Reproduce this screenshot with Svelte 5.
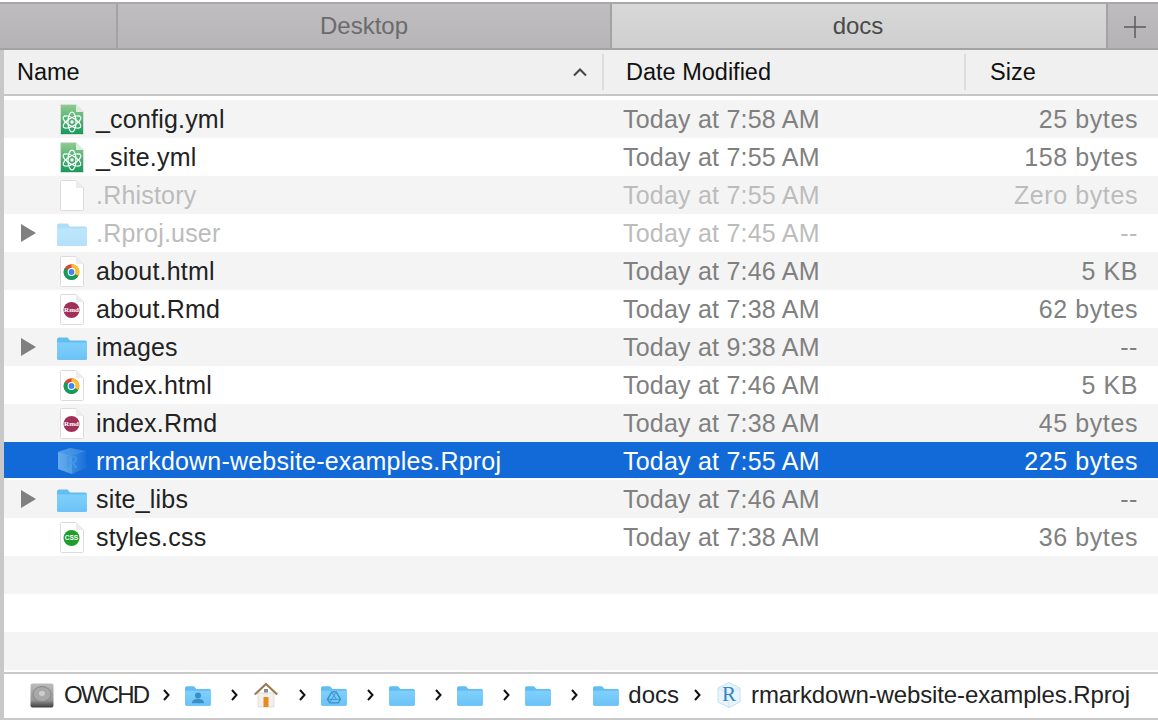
<script lang="ts">
  type Row = { name: string; date: string; size: string; icon: string; dim?: boolean; open?: boolean; selected?: boolean };

  const rows: Row[] = [
    { name: "_config.yml", date: "Today at 7:58 AM", size: "25 bytes", icon: "atom" },
    { name: "_site.yml", date: "Today at 7:55 AM", size: "158 bytes", icon: "atom" },
    { name: ".Rhistory", date: "Today at 7:55 AM", size: "Zero bytes", icon: "blank", dim: true },
    { name: ".Rproj.user", date: "Today at 7:45 AM", size: "--", icon: "folder", dim: true, open: true },
    { name: "about.html", date: "Today at 7:46 AM", size: "5 KB", icon: "chrome" },
    { name: "about.Rmd", date: "Today at 7:38 AM", size: "62 bytes", icon: "rmd" },
    { name: "images", date: "Today at 9:38 AM", size: "--", icon: "folder", open: true },
    { name: "index.html", date: "Today at 7:46 AM", size: "5 KB", icon: "chrome" },
    { name: "index.Rmd", date: "Today at 7:38 AM", size: "45 bytes", icon: "rmd" },
    { name: "rmarkdown-website-examples.Rproj", date: "Today at 7:55 AM", size: "225 bytes", icon: "cube", selected: true },
    { name: "site_libs", date: "Today at 7:46 AM", size: "--", icon: "folder", open: true },
    { name: "styles.css", date: "Today at 7:38 AM", size: "36 bytes", icon: "css" }
  ];
  const fillers = [0, 1, 2];
</script>

{#snippet page(fill = "#fff")}
  <path d="M1.5 0.5H16L23.5 8V29a1 1 0 0 1-1 1.5H1.5a1 1 0 0 1-1-1.5V1.5a1 1 0 0 1 1-1z" fill={fill} stroke="#dcdcdc" stroke-width="1" />
  <path d="M16 0.5V8H23.5z" fill="#ececec" />
{/snippet}

{#snippet folderShape()}
  <path d="M2 2.5h8.5l2.5 3h15a2 2 0 0 1 2 2V23a2 2 0 0 1-2 2H2a2 2 0 0 1-2-2V4.5a2 2 0 0 1 2-2z" fill="#62bdf3" />
  <path d="M0 7.5h30V23a2 2 0 0 1-2 2H2a2 2 0 0 1-2-2z" fill="url(#folder-body)" />
{/snippet}

{#snippet fileIcon(kind: string, dim: boolean)}
  {#if kind === "folder"}
    <svg class="ico folder" class:faded={dim} viewBox="0 0 30 25">{@render folderShape()}</svg>
  {:else if kind === "cube"}
    <svg class="ico cube" viewBox="0 0 30 28">
      <path d="M1 5 13 1l16 3v17l-14 6L1 22z" fill="url(#cube-dark)" />
      <path d="M1 5l14 4v18L1 22z" fill="#6db2ee" opacity="0.45" />
      <path d="M1 5 13 1l16 3-14 5z" fill="#4a9ae8" opacity="0.5" />
      <text x="15" y="21" class="cube-r">R</text>
    </svg>
  {:else}
    <svg class="ico doc" viewBox="0 0 24 31">
      {#if kind === "atom"}
        {@render page("url(#atom-green)")}
        <path d="M16 0.5V8H23.5z" fill="#dcecdf" />
        <g fill="none" stroke="#fff" stroke-width="1.2">
          <ellipse cx="12" cy="18" rx="10" ry="4" transform="rotate(30 12 18)" />
          <ellipse cx="12" cy="18" rx="10" ry="4" transform="rotate(90 12 18)" />
          <ellipse cx="12" cy="18" rx="10" ry="4" transform="rotate(150 12 18)" />
        </g>
        <circle cx="12" cy="18" r="1.7" fill="#fff" />
      {:else if kind === "blank"}
        {@render page()}
      {:else if kind === "chrome"}
        {@render page()}
        <circle cx="11.5" cy="16" r="7.8" fill="#db4437" />
        <path d="M11.5 16 4.7 19.9A7.8 7.8 0 0 1 4.8 12z" fill="#0f9d58" />
        <path d="M11.5 16 18.3 19.9A7.8 7.8 0 0 1 4.7 19.9z" fill="#0f9d58" />
        <path d="M11.5 16V8.2A7.8 7.8 0 0 1 18.3 19.9z" fill="#fbc02d" />
        <circle cx="11.5" cy="16" r="3.9" fill="#fff" />
        <circle cx="11.5" cy="16" r="2.9" fill="#4285f4" />
      {:else if kind === "rmd"}
        {@render page()}
        <circle cx="11.5" cy="16" r="8" fill="#a03058" />
        <text x="11.5" y="18.3" class="badge rmd-text">Rmd</text>
      {:else if kind === "css"}
        {@render page()}
        <circle cx="11.5" cy="16" r="8" fill="#1f9e2c" />
        <text x="11.5" y="18.3" class="badge css-text">CSS</text>
      {/if}
    </svg>
  {/if}
{/snippet}

{#snippet chevron()}
  <svg class="chev" viewBox="0 0 7 12"><path d="M1 1l4.5 5L1 11" fill="none" stroke="#111" stroke-width="2" /></svg>
{/snippet}

<svg class="defs" aria-hidden="true">
  <defs>
    <linearGradient id="folder-body" x1="0" y1="0" x2="0" y2="1">
      <stop offset="0" stop-color="#7fd0fb" />
      <stop offset="1" stop-color="#6cc2f6" />
    </linearGradient>
    <linearGradient id="atom-green" x1="0" y1="0" x2="0" y2="1">
      <stop offset="0" stop-color="#90cc8f" />
      <stop offset="1" stop-color="#14995c" />
    </linearGradient>
    <linearGradient id="cube-dark" x1="0" y1="0" x2="1" y2="0">
      <stop offset="0" stop-color="#5aa5ea" />
      <stop offset="1" stop-color="#1a6fd8" />
    </linearGradient>
    <linearGradient id="drive" x1="0" y1="0" x2="0" y2="1">
      <stop offset="0" stop-color="#bcbcbc" />
      <stop offset="0.7" stop-color="#959595" />
      <stop offset="1" stop-color="#3c3c3c" />
    </linearGradient>
  </defs>
</svg>

<div class="window">
  <div class="tabs">
    <div class="tab-spacer"></div>
    <div class="tab inactive">Desktop</div>
    <div class="tab active">docs</div>
    <div class="tab-add">
      <svg viewBox="0 0 22 22" width="22" height="22"><path d="M11 0v22M0 11h22" stroke="#5c5c5c" stroke-width="1.5" /></svg>
    </div>
  </div>

  <div class="head">
    <div class="head-name">
      <span>Name</span>
      <svg class="sort" viewBox="0 0 14 9"><path d="M1 7.5 7 1.5l6 6" fill="none" stroke="#444" stroke-width="2" /></svg>
    </div>
    <div class="head-date">Date Modified</div>
    <div class="head-size">Size</div>
  </div>

  <div class="list">
    {#each rows as row (row.name)}
      <div class="row" class:dim={row.dim} class:selected={row.selected}>
        <div class="disc">{#if row.open}<span class="tri"></span>{/if}</div>
        <div class="icon-cell">{@render fileIcon(row.icon, !!row.dim)}</div>
        <div class="name">{row.name}</div>
        <div class="date">{row.date}</div>
        <div class="size">{row.size}</div>
      </div>
    {/each}
    {#each fillers as i (i)}
      <div class="row"></div>
    {/each}
  </div>

  <div class="path">
    <svg class="crumb-ico drive" viewBox="0 0 24 25">
      <rect x="0.5" y="0.5" width="23" height="24" rx="2" fill="url(#drive)" />
      <ellipse cx="12" cy="11" rx="9" ry="7.5" fill="#a8a8a8" stroke="#888" />
      <ellipse cx="12" cy="10.5" rx="3" ry="2.4" fill="#cdcdcd" />
    </svg>
    <span class="crumb-text caps">OWCHD</span>
    {@render chevron()}
    <div class="crumb">
      <svg class="crumb-folder" viewBox="0 0 30 25">
        {@render folderShape()}
        <circle cx="15" cy="13" r="3.5" fill="#3b8fc9" />
        <path d="M8 22c0-4 3-5 7-5s7 1 7 5z" fill="#3b8fc9" />
      </svg>
    </div>
    {@render chevron()}
    <div class="crumb">
      <svg class="crumb-home" viewBox="0 0 24 26">
        <path d="M4 11h16v14H4z" fill="#f2f0ec" stroke="#d5d0c8" stroke-width="0.6" />
        <path d="M0.8 12.5 12 2l11.2 10.5" fill="none" stroke="#9c7a50" stroke-width="2.2" />
        <rect x="10" y="7" width="4" height="3.5" fill="#8a8a8a" />
        <rect x="9.5" y="15" width="5" height="10" fill="#e88a1c" />
      </svg>
    </div>
    {@render chevron()}
    <div class="crumb">
      <svg class="crumb-folder" viewBox="0 0 30 25">
        {@render folderShape()}
        <path d="M12.5 9h5l5 8.5-2.5 4H10l-2.5-4z" fill="none" stroke="#3b8fc9" stroke-width="1.5" />
        <path d="M12.5 9l5 8.5h5M17.5 9l-7.5 12.5M7.5 17.5h10" fill="none" stroke="#3b8fc9" stroke-width="1" />
      </svg>
    </div>
    {@render chevron()}
    <div class="crumb"><svg class="crumb-folder" viewBox="0 0 30 25">{@render folderShape()}</svg></div>
    {@render chevron()}
    <div class="crumb"><svg class="crumb-folder" viewBox="0 0 30 25">{@render folderShape()}</svg></div>
    {@render chevron()}
    <div class="crumb"><svg class="crumb-folder" viewBox="0 0 30 25">{@render folderShape()}</svg></div>
    {@render chevron()}
    <div class="crumb-docs">
      <svg class="crumb-folder" viewBox="0 0 30 25">{@render folderShape()}</svg>
      <span class="crumb-text">docs</span>
    </div>
    {@render chevron()}
    <div class="crumb-file">
      <svg class="crumb-cube" viewBox="0 0 26 28">
        <path d="M2 7 13 1.5 24 7v14l-11 5.5L2 21z" fill="#e8f3fb" stroke="#c4e0f2" />
        <path d="M2 7l11 5.5L24 7M13 20v6.5" fill="none" stroke="#d2e7f5" />
        <text x="13" y="20" class="small-r">R</text>
      </svg>
      <span class="crumb-text file-text">rmarkdown-website-examples.Rproj</span>
    </div>
  </div>
</div>

<style>
  :global(body) {
    margin: 0;
    background: #fff;
  }

  .defs {
    display: block;
    width: 0;
    height: 0;
  }

  .window {
    width: 1158px;
    height: 720px;
    box-sizing: border-box;
    display: flex;
    flex-direction: column;
    overflow: hidden;
    padding-top: 2px;
    font-family: "Liberation Sans", Arial, sans-serif;
    font-size: 24px;
    color: #222;
    background: #fff;
  }

  .tabs {
    height: 48px;
    box-sizing: border-box;
    display: flex;
    border-top: 2px solid #a8a8a8;
    border-bottom: 2px solid #a3a3a3;
    flex: none;
  }

  .tab-spacer {
    width: 116px;
    background: linear-gradient(#bebcbe, #b5b3b5);
  }

  .tab {
    display: flex;
    align-items: center;
    justify-content: center;
    box-sizing: border-box;
    padding-bottom: 1px;
  }

  .inactive {
    width: 494px;
    color: #6b6b6b;
    background: linear-gradient(#bfbdbf, #b7b5b7);
    border-left: 2px solid #a3a3a3;
  }

  .active {
    width: 496px;
    padding-right: 2px;
    color: #4a4a4a;
    background: linear-gradient(#d9d8d9, #d0cfd0);
    border-left: 2px solid #a3a3a3;
  }

  .tab-add {
    flex: 1;
    display: flex;
    align-items: center;
    justify-content: center;
    box-sizing: border-box;
    padding: 2px 0 0 4px;
    background: linear-gradient(#bebcbe, #b5b3b5);
    border-left: 2px solid #a3a3a3;
  }

  .head {
    height: 46px;
    box-sizing: border-box;
    margin-left: 4px;
    display: flex;
    align-items: center;
    flex: none;
    font-size: 23.5px;
    background: #f0f0f0;
    border-bottom: 2px solid #c6c6c6;
    color: #111;
    box-shadow: -4px 0 0 #c8c8c8;
  }

  .head-name {
    width: 598px;
    box-sizing: border-box;
    padding: 0 15px 0 13px;
    display: flex;
    align-items: center;
    justify-content: space-between;
  }

  .sort {
    width: 14px;
    height: 9px;
  }

  .head-date,
  .head-size {
    height: 36px;
    display: flex;
    align-items: center;
    box-sizing: border-box;
    border-left: 2px solid #dcdcdc;
  }

  .head-date {
    width: 362px;
    padding-left: 22px;
  }

  .head-size {
    padding-left: 24px;
  }

  .list {
    flex: 1;
    margin-left: 4px;
    padding-top: 4px;
    box-shadow: -4px 0 0 #c8c8c8;
    border-bottom: 2px solid #c9c9c9;
    overflow: hidden;
  }

  .row {
    height: 38px;
    display: grid;
    grid-template-columns: 52px 40px 527px 1fr auto;
    align-items: center;
    padding-right: 20px;
  }

  .row:nth-child(odd) {
    background: #f4f4f4;
  }

  .name,
  .date,
  .size {
    font-size: 25px;
    white-space: nowrap;
  }

  .name {
    letter-spacing: 0.2px;
  }

  .date {
    letter-spacing: 0.22px;
  }

  .size {
    letter-spacing: 0.6px;
  }

  .disc {
    padding-left: 17px;
    display: flex;
  }

  .tri {
    width: 0;
    height: 0;
    border-left: 15px solid #808080;
    border-top: 9px solid transparent;
    border-bottom: 9px solid transparent;
  }

  .icon-cell {
    display: flex;
    align-items: center;
  }

  .ico {
    display: block;
  }

  .doc {
    width: 24px;
    height: 31px;
    margin-left: 4px;
  }

  .folder {
    width: 30px;
    height: 25px;
    margin-left: 1px;
  }

  .folder.faded {
    opacity: 0.5;
  }

  .cube {
    width: 30px;
    height: 28px;
    margin-left: 1px;
  }

  .badge {
    fill: #fff;
    font-family: "Liberation Serif", serif;
    font-weight: 700;
    text-anchor: middle;
  }

  .rmd-text {
    font-size: 7px;
  }

  .css-text {
    font-size: 6.5px;
    font-family: "Liberation Sans", sans-serif;
  }

  .cube-r {
    fill: #3f9bea;
    font-size: 17px;
    text-anchor: middle;
    font-family: "Liberation Sans", sans-serif;
  }

  .small-r {
    fill: #2f86c8;
    font-size: 21px;
    text-anchor: middle;
    font-family: "Liberation Serif", serif;
  }

  .date,
  .size {
    color: #808080;
  }

  .dim .name,
  .dim .date,
  .dim .size {
    color: #bcbcbc;
  }

  .row.selected {
    background: #1269d8;
    box-shadow: inset 0 -2px 0 #fff;
  }

  .selected .name,
  .selected .date,
  .selected .size {
    color: #fff;
  }

  .path {
    height: 46px;
    box-sizing: border-box;
    flex: none;
    margin-left: 4px;
    padding: 0 0 2px 26px;
    display: flex;
    align-items: center;
    gap: 15px;
    background: #fff;
    border-bottom: 2px solid #c9c9c9;
    box-shadow: -4px 0 0 #c8c8c8;
    white-space: nowrap;
  }

  .caps {
    letter-spacing: -1.8px;
  }

  .file-text {
    letter-spacing: -0.12px;
  }

  .drive {
    width: 24px;
    height: 25px;
    margin-right: -5px;
  }

  .chev {
    width: 7px;
    height: 12px;
    flex: none;
  }

  .crumb {
    width: 31px;
    display: flex;
    align-items: center;
    flex: none;
  }

  .crumb-folder {
    width: 26px;
    height: 22px;
    flex: none;
  }

  .crumb-home {
    width: 24px;
    height: 26px;
    margin-left: 1px;
    flex: none;
  }

  .crumb-docs,
  .crumb-file {
    display: flex;
    align-items: center;
    gap: 9px;
  }

  .crumb-cube {
    width: 26px;
    height: 28px;
  }
</style>
